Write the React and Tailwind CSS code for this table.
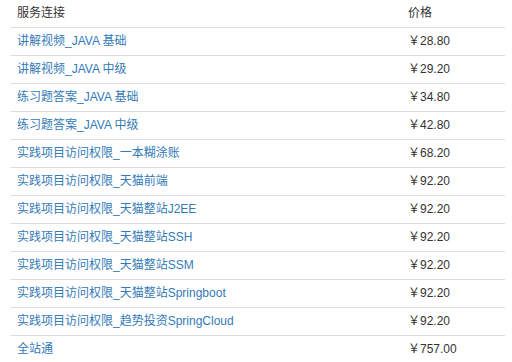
const rows = [
  ['讲解视频_JAVA 基础', '28.80'],
  ['讲解视频_JAVA 中级', '29.20'],
  ['练习题答案_JAVA 基础', '34.80'],
  ['练习题答案_JAVA 中级', '42.80'],
  ['实践项目访问权限_一本糊涂账', '68.20'],
  ['实践项目访问权限_天猫前端', '92.20'],
  ['实践项目访问权限_天猫整站J2EE', '92.20'],
  ['实践项目访问权限_天猫整站SSH', '92.20'],
  ['实践项目访问权限_天猫整站SSM', '92.20'],
  ['实践项目访问权限_天猫整站Springboot', '92.20'],
  ['实践项目访问权限_趋势投资SpringCloud', '92.20'],
  ['全站通', '757.00'],
];

export default function App() {
  return (
    <div className="h-[362px] overflow-hidden bg-white px-[11px] font-['Liberation_Sans','Noto_Sans_CJK_SC',sans-serif] text-[12px] text-[#333]">
      <table className="w-[494px] table-fixed border-collapse">
        <thead>
          <tr className="h-[27px]">
            <th className="w-[391px] px-[6px] text-left font-normal">服务连接</th>
            <th className="px-[6px] text-left font-normal">价格</th>
          </tr>
        </thead>
        <tbody>
          {rows.map(([name, price]) => (
            <tr key={name} className="h-[28px] border-t border-[#ddd]">
              <td className="px-[6px]">
                <a href="#" className="text-[#337ab7]">{name}</a>
              </td>
              <td className="px-[6px]">￥{price}</td>
            </tr>
          ))}
        </tbody>
      </table>
    </div>
  );
}
